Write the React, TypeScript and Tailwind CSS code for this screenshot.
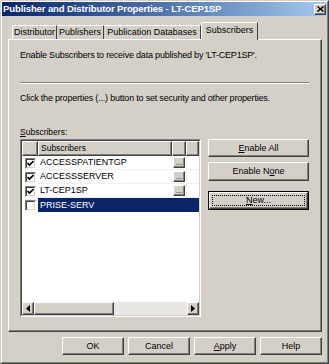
import React from "react";

const raised =
  "border border-t-white border-l-white border-r-[#404040] border-b-[#404040] shadow-[inset_-1px_-1px_0_#808080]";

function Btn({
  children,
  className = "",
  isDefault = false,
}: {
  children: React.ReactNode;
  className?: string;
  isDefault?: boolean;
}) {
  if (isDefault) {
    return (
      <div className={"border border-black " + className}>
        <div className={raised + " h-full w-full flex items-center justify-center p-[2px]"}>
          <div className="w-full h-full border border-dotted border-black flex items-center justify-center leading-none">
            {children}
          </div>
        </div>
      </div>
    );
  }
  return (
    <div className={raised + " flex items-center justify-center leading-none " + className}>
      {children}
    </div>
  );
}

function Check({ checked }: { checked: boolean }) {
  return (
    <div className="w-[11px] h-[11px] border border-t-[#808080] border-l-[#808080] border-r-white border-b-white">
      <div className="w-full h-full bg-white border border-t-[#404040] border-l-[#404040] border-r-[#d4d0c8] border-b-[#d4d0c8] flex items-center justify-center">
        {checked && (
          <svg width="7" height="7" viewBox="0 0 7 7">
            <path d="M0.5 3 L2.5 5 L6.5 1" stroke="#000" strokeWidth="1.6" fill="none" />
          </svg>
        )}
      </div>
    </div>
  );
}

const rows = [
  { name: "ACCESSPATIENTGP", checked: true, btn: true, sel: false },
  { name: "ACCESSSERVER", checked: true, btn: true, sel: false },
  { name: "LT-CEP1SP", checked: true, btn: true, sel: false },
  { name: "PRISE-SERV", checked: false, btn: false, sel: true },
];

export default function App() {
  return (
    <div className="w-[329px] h-[364px] bg-[#d4d0c8] border border-t-[#d4d0c8] border-l-[#d4d0c8] border-r-[#404040] border-b-[#404040] font-['Liberation_Sans',Arial,sans-serif] text-[9px] text-black overflow-hidden">
      <div className="w-full h-full border border-t-white border-l-white border-r-[#808080] border-b-[#808080] flex flex-col">
        {/* Title bar */}
        <div className="h-[14px] bg-gradient-to-r from-[#0a246a] to-[#a6caf0] flex items-center justify-between pl-[1px] pr-[1px]">
          <span className="text-white font-bold text-[9.5px] leading-none tracking-[-0.1px]">
            Publisher and Distributor Properties - LT-CEP1SP
          </span>
          <div className={raised + " w-[12px] h-[11px] bg-[#d4d0c8] flex items-center justify-center"}>
            <svg width="7" height="6" viewBox="0 0 7 6">
              <path d="M0.5 0.5 L6.5 5.5 M6.5 0.5 L0.5 5.5" stroke="#000" strokeWidth="1.5" />
            </svg>
          </div>
        </div>

        <div className="pl-[6px] pr-[5px] flex flex-col">
          {/* Tabs */}
          <div className="h-[17px] mt-[6px] flex items-end pl-[4px] relative z-10">
            <div className="w-[45px] h-[14px] border-t border-l border-t-white border-l-white border-r border-r-[#404040] rounded-tl-[2px] flex items-center justify-center leading-none">
              Distributor
            </div>
            <div className="w-[47px] h-[14px] border-t border-t-white border-r border-r-[#404040] flex items-center justify-center leading-none">
              Publishers
            </div>
            <div className="w-[97px] h-[14px] border-t border-t-white border-r border-r-[#404040] flex items-center justify-center leading-none">
              Publication Databases
            </div>
            <div className="w-[57px] h-[18px] -mb-px bg-[#d4d0c8] border-t border-l border-t-white border-l-white border-r border-r-[#404040] rounded-tl-[2px] flex items-center justify-center leading-none pb-[2px]">
              Subscribers
            </div>
          </div>

          {/* Panel */}
          <div className="h-[293px] border border-t-white border-l-white border-r-[#404040] border-b-[#404040] shadow-[inset_-1px_-1px_0_#808080] pl-[11px] flex flex-col">
            <div className="h-[12px] leading-[12px] mt-[9px] text-[9px] tracking-[-0.2px]">
              Enable Subscribers to receive data published by 'LT-CEP1SP'.
            </div>
            <div className="w-[289px] h-[2px] mt-[21px] border-t border-t-[#808080] border-b border-b-white" />
            <div className="h-[12px] leading-[12px] mt-[8px] text-[9px] tracking-[-0.2px]">
              Click the properties (...) button to set security and other properties.
            </div>
            <div className="h-[12px] leading-[12px] mt-[22px] text-[8.5px]">
              <span className="underline">S</span>ubscribers:
            </div>
            <div className="flex mt-[1px]">
              {/* List */}
              <div className="w-[181px] h-[178px] border border-t-[#808080] border-l-[#808080] border-r-white border-b-white">
                <div className="w-full h-full bg-white border border-t-[#404040] border-l-[#404040] border-r-[#d4d0c8] border-b-[#d4d0c8] flex flex-col">
                  <div className="h-[15px] flex bg-[#d4d0c8]">
                    <div className={raised + " w-[16px] h-full"} />
                    <div className={raised + " w-[134px] h-full flex items-center pl-[2px] leading-none text-[8.5px]"}>
                      Subscribers
                    </div>
                    <div className={raised + " w-[14px] h-full"} />
                    <div className={raised + " flex-1 h-full"} />
                  </div>
                  {rows.map((r) => (
                    <div key={r.name} className="h-[14px] flex">
                      <div className="w-[16px] h-full flex items-center justify-center">
                        <Check checked={r.checked} />
                      </div>
                      <div
                        className={
                          "flex-1 h-full flex " +
                          (r.sel ? "bg-[#0a246a] text-white" : "border-b border-b-[#f0f0f0]")
                        }
                      >
                        <div className="w-[134px] h-full flex items-center pl-[2px] leading-none text-[9px]">
                          {r.name}
                        </div>
                        <div className="w-[14px] h-full flex items-start justify-center pt-px">
                          {r.btn && (
                            <div className={raised + " w-[12px] h-[11px] bg-[#d4d0c8] flex items-end justify-center text-[8px] leading-[7px] pb-[1px]"}>
                              ...
                            </div>
                          )}
                        </div>
                        <div className={"flex-1 h-full " + (r.sel ? "" : "border-l border-l-[#f0f0f0]")} />
                      </div>
                    </div>
                  ))}
                  <div className="flex-1" />
                  {/* Horizontal scrollbar */}
                  <div className="h-[13px] flex bg-[#e9e7e3]">
                    <div className={raised + " w-[12px] h-full bg-[#d4d0c8] flex items-center justify-center"}>
                      <svg width="4" height="7" viewBox="0 0 4 7">
                        <path d="M4 0 L0 3.5 L4 7 Z" fill="#000" />
                      </svg>
                    </div>
                    <div className={raised + " w-[80px] h-full bg-[#d4d0c8]"} />
                    <div className="flex-1" />
                    <div className={raised + " w-[12px] h-full bg-[#d4d0c8] flex items-center justify-center"}>
                      <svg width="4" height="7" viewBox="0 0 4 7">
                        <path d="M0 0 L4 3.5 L0 7 Z" fill="#000" />
                      </svg>
                    </div>
                  </div>
                </div>
              </div>
              {/* Side buttons */}
              <div className="ml-[7px] w-[101px] flex flex-col">
                <Btn className="h-[18px] text-[9px]">
                  <span>
                    <span className="underline">E</span>nable All
                  </span>
                </Btn>
                <Btn className="h-[19px] mt-[5px] text-[9px]">
                  <span>
                    Enable N<span className="underline">o</span>ne
                  </span>
                </Btn>
                <Btn className="h-[19px] mt-[10px] text-[9px]" isDefault>
                  <span>
                    <span className="underline">N</span>ew...
                  </span>
                </Btn>
              </div>
            </div>
          </div>

          {/* Bottom buttons */}
          <div className="flex justify-end gap-[4px] mt-[5px]">
            <Btn className="w-[62px] h-[18px] text-[9px]">OK</Btn>
            <Btn className="w-[62px] h-[18px] text-[9px]">Cancel</Btn>
            <Btn className="w-[62px] h-[18px] text-[9px]">
              <span>
                <span className="underline">A</span>pply
              </span>
            </Btn>
            <Btn className="w-[62px] h-[18px] text-[9px]">Help</Btn>
          </div>
        </div>
      </div>
    </div>
  );
}
